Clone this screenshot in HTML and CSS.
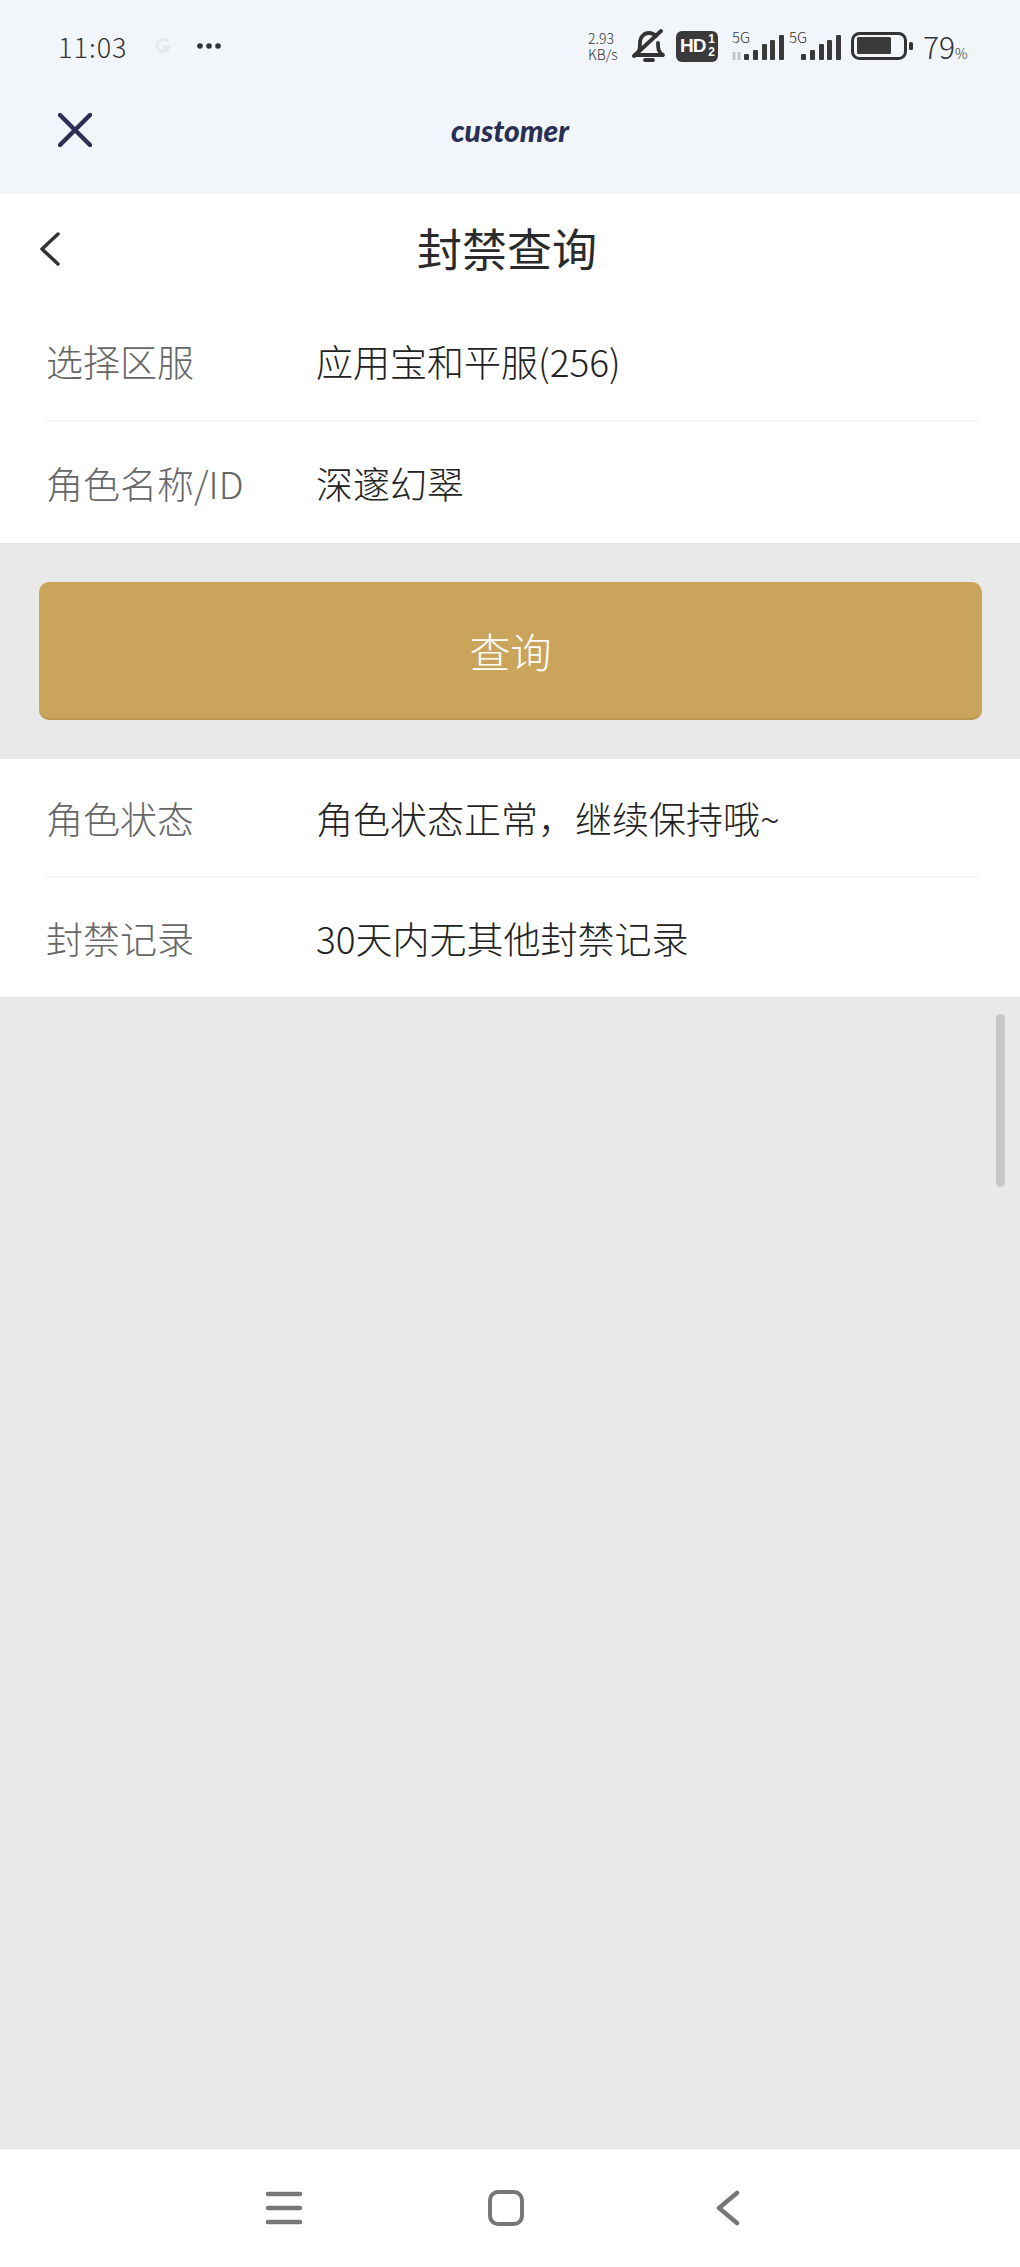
FILE: index.html
```html
<!DOCTYPE html>
<html lang="zh-CN">
<head>
    <meta charset="UTF-8">
    <meta name="viewport" content="width=device-width, initial-scale=1.0">
    <title>封禁查询</title>
    <link rel="stylesheet" href="styles.css">
</head>
<body>
    <div class="phone">
        <!-- Header -->
        <header class="header">
            <div class="status-bar">
                <div class="status-left">
                    <span class="time">11:03</span>
                    <svg class="ghost" width="16" height="16" viewBox="0 0 16 16" fill="none" stroke="#e6e8ea" stroke-width="3"><path d="M13 4 A6 6 0 1 0 14 9 H8"/></svg>
                    <svg class="dots" width="24" height="6" viewBox="0 0 24 6"><circle cx="3" cy="3" r="2.8"/><circle cx="12" cy="3" r="2.8"/><circle cx="21" cy="3" r="2.8"/></svg>
                </div>
                <div class="status-right">
                    <span class="speed">2.93<br>KB/s</span>
                    <svg width="34" height="34" viewBox="0 0 34 34" fill="none" stroke="#333" stroke-width="3.8" stroke-linecap="round" stroke-linejoin="round">
                        <path d="M3 26 C8 23 8 19 8 14 C8 8 12 4 17 4 C20 4 22 5 24 7 M26 14 C26 19 26 23 31 26 L3 26"/>
                        <path d="M2 27 L29 2"/>
                        <path d="M13 31 H21"/>
                    </svg>
                    <span class="hd">HD<span class="hd-nums"><b>1</b><b>2</b></span></span>
                    <svg class="signal" width="54" height="52" viewBox="0 -10 54 52">
                        <text x="2" y="13">5G</text>
                        <path d="M4 22 v8 M9 22 v8" stroke="#c4c6c8" stroke-width="3"/>
                        <rect x="14" y="24" width="5" height="6" rx="1"/>
                        <rect x="23" y="20" width="5" height="10" rx="1"/>
                        <rect x="32" y="14" width="5" height="16" rx="1"/>
                        <rect x="40" y="10" width="5" height="20" rx="1"/>
                        <rect x="49" y="5" width="5" height="25" rx="1"/>
                    </svg>
                    <svg class="signal" width="52" height="52" viewBox="0 -10 52 52">
                        <text x="0" y="13">5G</text>
                        <rect x="12" y="24" width="5" height="6" rx="1"/>
                        <rect x="21" y="20" width="5" height="10" rx="1"/>
                        <rect x="30" y="14" width="5" height="16" rx="1"/>
                        <rect x="38" y="10" width="5" height="20" rx="1"/>
                        <rect x="47" y="5" width="5" height="25" rx="1"/>
                    </svg>
                    <svg width="62" height="28" viewBox="0 0 62 28">
                        <rect x="1.5" y="1.5" width="53" height="25" rx="7" fill="none" stroke="#333" stroke-width="3"/>
                        <rect x="6" y="5" width="34" height="17" rx="1.5" fill="#3a3a3a"/>
                        <rect x="58" y="10" width="4" height="8" rx="1.5" fill="#333"/>
                    </svg>
                    <span class="battery-num">79<small>%</small></span>
                </div>
            </div>
            <div class="top-bar">
                <svg width="34" height="34" viewBox="0 0 34 34" stroke="#2f2f55" stroke-width="4.5" stroke-linecap="round"><path d="M2 2 L32 32 M32 2 L2 32"/></svg>
                <span class="app-name">customer</span>
                <span></span>
            </div>
        </header>

        <!-- Form card -->
        <section class="card">
            <div class="page-title">
                <svg class="back" width="20" height="34" viewBox="0 0 20 34" fill="none" stroke="#333" stroke-width="3.5" stroke-linecap="round" stroke-linejoin="round"><path d="M18 2 L2 17 L18 32"/></svg>
                <h1>封禁查询</h1>
            </div>
            <div class="row">
                <span class="label">选择区服</span>
                <span class="value">应用宝和平服(256)</span>
            </div>
            <div class="row">
                <span class="label">角色名称/ID</span>
                <span class="value">深邃幻翠</span>
            </div>
        </section>

        <div class="action">
            <button class="query-btn">查询</button>
        </div>

        <!-- Result card -->
        <section class="card result">
            <div class="row">
                <span class="label">角色状态</span>
                <span class="value">角色状态正常，继续保持哦~</span>
            </div>
            <div class="row">
                <span class="label">封禁记录</span>
                <span class="value">30天内无其他封禁记录</span>
            </div>
        </section>

        <div class="empty">
            <div class="scrollbar"></div>
        </div>

        <!-- Navigation bar -->
        <nav class="nav-bar">
            <svg width="36" height="36" viewBox="0 0 36 36" stroke="#777" stroke-width="4.5" stroke-linecap="round"><path d="M2 4 H34 M2 18 H34 M2 32 H34"/></svg>
            <svg width="36" height="36" viewBox="0 0 36 36" fill="none" stroke="#777" stroke-width="4"><rect x="2" y="2" width="32" height="32" rx="8"/></svg>
            <svg width="24" height="36" viewBox="0 0 24 36" fill="none" stroke="#777" stroke-width="4.5" stroke-linecap="round" stroke-linejoin="round"><path d="M21 3 L3 18 L21 33"/></svg>
        </nav>
    </div>
</body>
</html>
```

FILE: styles.css
```css
* {
    box-sizing: border-box;
}

body {
    margin: 0;
    font-family: "Noto Sans CJK SC", "Noto Sans", sans-serif;
    background: #e9e9e9;
}

.phone {
    display: flex;
    flex-direction: column;
    height: 100vh;
    overflow: hidden;
}

/* Header */
.header {
    background: #f2f6fa;
    height: 194px;
    flex: none;
}

.status-bar {
    display: flex;
    justify-content: space-between;
    align-items: center;
    height: 92px;
    padding: 0 54px 0 58px;
    color: #333;
}

.status-left {
    display: flex;
    align-items: center;
}

.time {
    width: 70px;
    font-size: 27px;
    font-weight: 300;
    letter-spacing: 1px;
    line-height: 1;
    white-space: nowrap;
}

.ghost {
    margin-left: 27px;
}

.dots {
    margin-left: 26px;
    fill: #333;
}

.status-right {
    display: flex;
    align-items: center;
    gap: 10px;
}

.speed {
    width: 34px;
    font-size: 14px;
    font-weight: 300;
    line-height: 16px;
    white-space: nowrap;
}

.hd {
    display: flex;
    align-items: center;
    justify-content: space-between;
    width: 42px;
    height: 31px;
    padding: 0 3px 0 4px;
    background: #3a3a3a;
    border-radius: 6px;
    color: #fff;
    font-family: "Liberation Sans", sans-serif;
    font-size: 19px;
    font-weight: 700;
    letter-spacing: -1px;
}

.hd-nums {
    display: flex;
    flex-direction: column;
    font-size: 12px;
    line-height: 13px;
    letter-spacing: 0;
}

.signal {
    margin-left: 2px;
    fill: #3a3a3a;
}

.signal + .signal {
    margin-left: -5px;
}

.signal text {
    font-size: 15px;
    font-weight: 300;
    fill: #333;
}

.battery-num {
    width: 43px;
    font-size: 30px;
    font-weight: 300;
    line-height: 1;
    white-space: nowrap;
}

.battery-num small {
    font-size: 14px;
}

.top-bar {
    display: grid;
    grid-template-columns: 1fr auto 1fr;
    align-items: center;
    height: 76px;
    padding: 0 58px;
}

.app-name {
    font-family: Lato, sans-serif;
    font-size: 30px;
    font-style: italic;
    font-weight: 900;
    color: #2a2f55;
}

/* Cards and rows */
.card {
    background: #fff;
    flex: none;
}

.page-title {
    position: relative;
    display: flex;
    justify-content: center;
    align-items: center;
    height: 107px;
    padding-right: 6px;
}

.page-title h1 {
    margin: 0;
    font-size: 45px;
    font-weight: 400;
    line-height: 1;
    color: #2b2b2b;
}

.back {
    position: absolute;
    left: 40px;
    top: 38px;
}

.row {
    display: flex;
    align-items: center;
    height: 121px;
    margin: 0 42px 0 46px;
    border-bottom: 2px solid #f4f4f4;
    font-size: 37px;
    font-weight: 300;
}

.row:last-child {
    border-bottom: none;
}

.result .row {
    height: 119px;
}

.label {
    width: 270px;
    flex: none;
    color: #666;
    white-space: nowrap;
}

.value {
    color: #222;
    white-space: nowrap;
}

/* Query button */
.action {
    flex: none;
    height: 216px;
    padding: 39px 38px 0 39px;
}

.query-btn {
    display: block;
    width: 100%;
    height: 138px;
    border: none;
    border-bottom: 2px solid #bc9750;
    border-radius: 10px;
    background: #cba45c;
    color: #fff;
    font-family: inherit;
    font-size: 41px;
    font-weight: 300;
}

/* Empty area */
.empty {
    position: relative;
    flex: 1;
}

.scrollbar {
    position: absolute;
    top: 17px;
    right: 15px;
    width: 9px;
    height: 173px;
    border-radius: 5px;
    background: #c8c8c8;
}

/* Navigation bar */
.nav-bar {
    display: grid;
    grid-template-columns: repeat(3, 222px);
    justify-content: center;
    justify-items: center;
    align-items: center;
    flex: none;
    height: 119px;
    padding-right: 8px;
    background: #fff;
    border-top: 1px solid #e2e2e2;
}
```
